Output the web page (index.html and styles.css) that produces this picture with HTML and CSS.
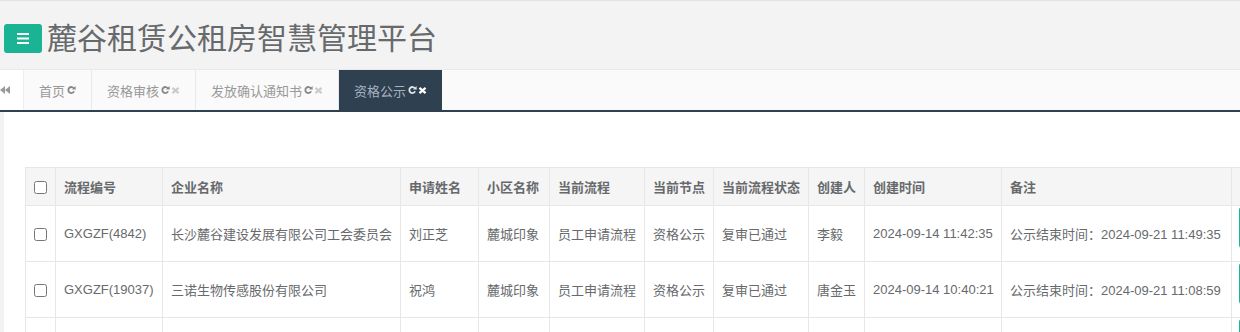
FILE: index.html
```html
<!DOCTYPE html>
<html lang="zh-CN">
<head>
    <meta charset="UTF-8">
    <title>麓谷租赁公租房智慧管理平台</title>
    <link rel="stylesheet" href="styles.css">
</head>
<body>
    <div class="topbar">
        <a class="menu-btn">
            <svg width="12" height="11" viewBox="0 0 12 11"><path d="M0 1h12M0 5.5h12M0 10h12" stroke="#fff" stroke-width="2"/></svg>
        </a>
        <h1 class="site-title">麓谷租赁公租房智慧管理平台</h1>
    </div>

    <nav class="tabbar">
        <div class="tab-back">
            <svg width="10" height="8" viewBox="0 0 10 8"><path d="M5 0v8L0 4zM10 0v8L5 4z" fill="#999"/></svg>
        </div>
        <div class="tab">首页<svg class="ico-refresh" viewBox="0 0 18 16"><path d="M14 5.2A6 6 0 1 0 14.2 10.5" fill="none" stroke="currentColor" stroke-width="3.6"/><path d="M10 6.8L17.5 7.2L17 0z" fill="currentColor"/></svg></div>
        <div class="tab">资格审核<svg class="ico-refresh" viewBox="0 0 18 16"><path d="M14 5.2A6 6 0 1 0 14.2 10.5" fill="none" stroke="currentColor" stroke-width="3.6"/><path d="M10 6.8L17.5 7.2L17 0z" fill="currentColor"/></svg><svg class="ico-close" viewBox="0 0 10 8"><path d="M1.5 1l7 6M8.5 1l-7 6" stroke="currentColor" stroke-width="2.6"/></svg></div>
        <div class="tab">发放确认通知书<svg class="ico-refresh" viewBox="0 0 18 16"><path d="M14 5.2A6 6 0 1 0 14.2 10.5" fill="none" stroke="currentColor" stroke-width="3.6"/><path d="M10 6.8L17.5 7.2L17 0z" fill="currentColor"/></svg><svg class="ico-close" viewBox="0 0 10 8"><path d="M1.5 1l7 6M8.5 1l-7 6" stroke="currentColor" stroke-width="2.6"/></svg></div>
        <div class="tab active">资格公示<svg class="ico-refresh" viewBox="0 0 18 16"><path d="M14 5.2A6 6 0 1 0 14.2 10.5" fill="none" stroke="currentColor" stroke-width="3.6"/><path d="M10 6.8L17.5 7.2L17 0z" fill="currentColor"/></svg><svg class="ico-close" viewBox="0 0 10 8"><path d="M1.5 1l7 6M8.5 1l-7 6" stroke="currentColor" stroke-width="2.6"/></svg></div>
    </nav>

    <div class="main">
        <table class="grid">
            <colgroup>
                <col style="width:30px"><col style="width:107px"><col style="width:238px"><col style="width:78px">
                <col style="width:71px"><col style="width:95px"><col style="width:69px"><col style="width:95px">
                <col style="width:56px"><col style="width:137px"><col style="width:230px"><col style="width:120px">
            </colgroup>
            <thead>
                <tr>
                    <th class="chk"><input type="checkbox"></th>
                    <th>流程编号</th>
                    <th>企业名称</th>
                    <th>申请姓名</th>
                    <th>小区名称</th>
                    <th>当前流程</th>
                    <th>当前节点</th>
                    <th>当前流程状态</th>
                    <th>创建人</th>
                    <th>创建时间</th>
                    <th>备注</th>
                    <th class="ops"></th>
                </tr>
            </thead>
            <tbody>
                <tr>
                    <td class="chk"><input type="checkbox"></td>
                    <td>GXGZF(4842)</td>
                    <td>长沙麓谷建设发展有限公司工会委员会</td>
                    <td>刘正芝</td>
                    <td>麓城印象</td>
                    <td>员工申请流程</td>
                    <td>资格公示</td>
                    <td>复审已通过</td>
                    <td>李毅</td>
                    <td>2024-09-14 11:42:35</td>
                    <td>公示结束时间：2024-09-21 11:49:35</td>
                    <td class="ops"><span class="op-btn"></span></td>
                </tr>
                <tr>
                    <td class="chk"><input type="checkbox"></td>
                    <td>GXGZF(19037)</td>
                    <td>三诺生物传感股份有限公司</td>
                    <td>祝鸿</td>
                    <td>麓城印象</td>
                    <td>员工申请流程</td>
                    <td>资格公示</td>
                    <td>复审已通过</td>
                    <td>唐金玉</td>
                    <td>2024-09-14 10:40:21</td>
                    <td>公示结束时间：2024-09-21 11:08:59</td>
                    <td class="ops"><span class="op-btn"></span></td>
                </tr>
                <tr>
                    <td class="chk"></td>
                    <td></td><td></td><td></td><td></td><td></td><td></td>
                    <td></td><td></td><td></td><td></td>
                    <td class="ops"><span class="op-btn"></span></td>
                </tr>
            </tbody>
        </table>
    </div>
</body>
</html>
```

FILE: styles.css
```css
* {
    box-sizing: border-box;
}

body {
    margin: 0;
    width: 1240px;
    height: 332px;
    overflow: hidden;
    background: #f3f3f4;
    color: #676a6c;
    font-family: "Liberation Sans", "Noto Sans CJK SC", sans-serif;
    font-size: 13px;
}

/* top header */
.topbar {
    height: 70px;
    display: flex;
    align-items: flex-start;
    gap: 5px;
    padding: 22px 0 0 4px;
    background: #f3f3f3;
    border-top: 1px solid #e2e2e2;
    border-bottom: 1px solid #e7eaec;
}

.menu-btn {
    width: 38px;
    height: 29px;
    margin-top: 1px;
    display: flex;
    align-items: center;
    justify-content: center;
    background: #1ab394;
    border-radius: 3px;
}

.site-title {
    margin: 1px 0 0;
    font-size: 30px;
    font-weight: normal;
    line-height: 30px;
    color: #676a6c;
}

/* tabs */
.tabbar {
    display: flex;
    height: 42px;
    background: #fafafa;
    border-bottom: 2px solid #2f4050;
}

.tab-back {
    width: 24px;
    display: flex;
    align-items: center;
    background: #fff;
    border-right: 1px solid #eee;
}

.tab {
    display: flex;
    align-items: center;
    padding: 0 15px;
    color: #999;
    border-right: 1px solid #e7eaec;
    white-space: nowrap;
}

.tab .ico-refresh {
    width: 9px;
    height: 8px;
    margin-left: 2px;
    color: #888;
}

.tab .ico-close {
    width: 9px;
    height: 7px;
    margin-left: 1px;
    color: #ccc;
}

.tab.active {
    background: #2f4050;
    color: #a7b1c2;
    border-right: none;
}

.tab.active .ico-refresh {
    color: #dfe4ea;
}

.tab.active .ico-close {
    color: #fff;
}

/* content */
.main {
    height: 220px;
    margin-left: 4px;
    padding: 55px 0 0 21px;
    background: #fff;
    overflow: hidden;
}

.grid {
    width: 1326px;
    table-layout: fixed;
    border-collapse: collapse;
    border: 1px solid #e7e7e7;
}

.grid th,
.grid td {
    padding: 0 8px;
    border: 1px solid #e7e7e7;
    text-align: left;
    white-space: nowrap;
    overflow: hidden;
}

.grid th {
    height: 38px;
    background: #f5f5f5;
    font-weight: bold;
}

.grid td {
    height: 56px;
}

.grid .chk {
    padding: 0;
    text-align: center;
}

.grid input {
    margin: 0;
    width: 13px;
    height: 13px;
    vertical-align: middle;
}

.grid th.ops,
.grid td.ops {
    padding-left: 7px;
}

.grid td.ops {
    vertical-align: top;
    padding-top: 1px;
}

.op-btn {
    display: block;
    width: 60px;
    height: 41px;
    background: #1ab394;
    border-radius: 3px;
}
```
